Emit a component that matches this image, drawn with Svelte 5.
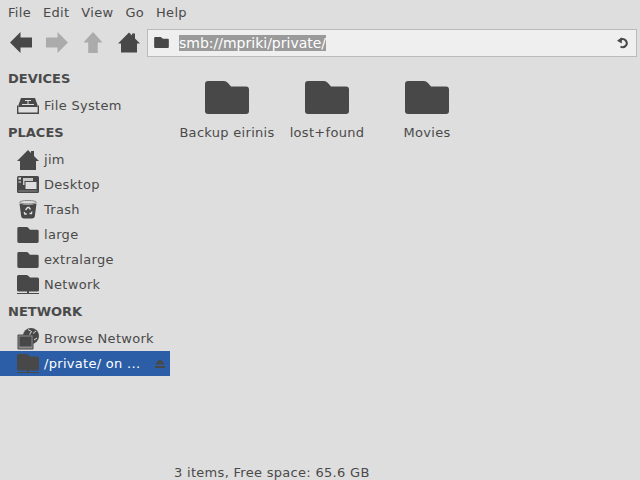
<script>
	const menus = ['File', 'Edit', 'View', 'Go', 'Help'];
	const places = [
		{ name: 'jim', icon: 'home' },
		{ name: 'Desktop', icon: 'desktop' },
		{ name: 'Trash', icon: 'trash' },
		{ name: 'large', icon: 'folder' },
		{ name: 'extralarge', icon: 'folder' },
		{ name: 'Network', icon: 'netfolder' }
	];
	const folders = ['Backup eirinis', 'lost+found', 'Movies'];
</script>

{#snippet folder(cls)}
	<svg class={cls} viewBox="0 0 44 33">
		<path d="M3 0H19Q21 0 23 2L26 5.500H41Q44 5.500 44 8.500V30Q44 33 41 33H3Q0 33 0 30V3Q0 0 3 0Z" />
	</svg>
{/snippet}

{#snippet icon(kind)}
	{#if kind === 'folder'}
		{@render folder('side-icon')}
	{:else if kind === 'netfolder'}
		<svg class="side-icon tall" viewBox="0 0 22 20">
			<path d="M1.500 0H9.500Q10.500 0 11.500 1L13 2.500H20.500Q22 2.500 22 4V15Q22 16.500 20.500 16.500H1.500Q0 16.500 0 15V1.500Q0 0 1.500 0Z" />
			<rect x="0" y="18" width="22" height="1" />
			<rect x="10" y="16" width="2" height="2" />
		</svg>
	{:else if kind === 'home'}
		<svg class="side-icon tall" viewBox="0 0 22 20">
			<path d="M11 0L14 3V1H17V6L22 11H19V20H3V11H0Z" />
		</svg>
	{:else if kind === 'desktop'}
		<svg class="side-icon tall" viewBox="0 0 22 17">
			<rect width="22" height="17" rx="1.500" />
			<rect x="1.500" y="1.500" width="2.500" height="2" fill="#dedede" />
			<rect x="1.500" y="5" width="2.500" height="2" fill="#9a9a9a" />
			<rect x="6" y="2" width="10" height="7" fill="#c8c8c8" />
			<rect x="7.500" y="5" width="12" height="8" fill="#484848" />
			<rect x="8.500" y="6" width="11" height="7" fill="#dedede" />
			<rect x="1.500" y="14.500" width="19" height="1" fill="#8a8a8a" />
		</svg>
	{:else if kind === 'trash'}
		<svg class="side-icon tall" viewBox="0 0 22 18.500">
			<ellipse cx="11" cy="2.200" rx="8.500" ry="1.700" fill="none" stroke="#8a8a8a" />
			<path d="M2.500 3.500Q11 6 19.500 3.500L17.800 16.500Q17.400 18.500 15 18.500H7Q4.600 18.500 4.200 16.500Z" />
			<path d="M8.500 10L10.500 7.500H12L13.500 9.500M14.800 11.500L14.500 13.500H12.500M9.800 14H7.800L7.200 12" fill="none" stroke="#dedede" stroke-width="1.300" />
		</svg>
	{:else if kind === 'drive'}
		<svg class="side-icon tall" viewBox="0 0 22 16">
			<path d="M4 0H18L20.500 7V9H1.500V7Z" />
			<rect x="8" y="2" width="6" height="1" fill="#dedede" />
			<rect x="10.500" y="3" width="1" height="3" fill="#dedede" />
			<rect x="5" y="6" width="12" height="1" fill="#dedede" />
			<path d="M0.700 7.500V15.200H21.300V7.500" fill="none" stroke="#484848" stroke-width="1.400" />
		</svg>
	{:else if kind === 'browse'}
		<svg class="side-icon big" viewBox="0 0 22 22">
			<circle cx="14" cy="8" r="8" />
			<path d="M11 1.500L14.500 3.500L12.500 6.500L16 9M19 3L16 5.500M17 12L20 10" fill="none" stroke="#dedede" />
			<rect x="0.500" y="6.500" width="16" height="15" rx="1" />
			<rect x="1.500" y="7.500" width="14" height="13" fill="#8c8c8c" />
			<rect x="2.500" y="8.500" width="12" height="10" fill="#484848" />
		</svg>
	{/if}
{/snippet}

{#snippet row(name, kind, selected = false)}
	<div class="row" class:selected>
		<span class="icon-box">{@render icon(kind)}</span>
		<span class="row-name">{name}</span>
		{#if selected}
			<svg class="eject" viewBox="0 0 10 9">
				<path d="M5 0L10 5.500H0Z" />
				<rect y="7" width="10" height="2" />
			</svg>
		{/if}
	</div>
{/snippet}

<div class="window">
	<nav class="menubar">
		{#each menus as m}
			<span class="menu">{m}</span>
		{/each}
	</nav>

	<div class="toolbar">
		<button class="tool" aria-label="Back">
			<svg viewBox="0 0 22 21"><path d="M0 10.500L10.500 0V5.500H22V15.500H10.500V21Z" /></svg>
		</button>
		<button class="tool off" aria-label="Forward">
			<svg viewBox="0 0 22 21"><path d="M22 10.500L11.500 0V5.500H0V15.500H11.500V21Z" /></svg>
		</button>
		<button class="tool off" aria-label="Up">
			<svg viewBox="0 0 22 22"><path d="M11 0L21 11H16V22H6V11H1Z" /></svg>
		</button>
		<button class="tool" aria-label="Home">
			<svg viewBox="0 0 22 20"><path d="M11 0L14 3V1H17V6L22 11H19V20H3V11H0Z" /></svg>
		</button>
		<div class="address">
			<svg class="addr-folder" viewBox="0 0 44 33">
				<path d="M3 0H19Q21 0 23 2L26 5.500H41Q44 5.500 44 8.500V30Q44 33 41 33H3Q0 33 0 30V3Q0 0 3 0Z" />
			</svg>
			<span class="addr-text">smb://mpriki/private/</span>
			<svg class="reload" viewBox="0 0 12 12">
				<path d="M3.500 2.800A4 4 0 1 1 3.500 9.500" fill="none" stroke="#484848" stroke-width="2" />
				<path d="M0 3.800L4.800 0.300V6.500Z" />
			</svg>
		</div>
	</div>

	<div class="body">
		<aside class="sidebar">
			<h3>DEVICES</h3>
			{@render row('File System', 'drive')}
			<h3>PLACES</h3>
			{#each places as p}
				{@render row(p.name, p.icon)}
			{/each}
			<h3>NETWORK</h3>
			{@render row('Browse Network', 'browse')}
			{@render row('/private/ on ...', 'netfolder', true)}
		</aside>

		<main class="files">
			{#each folders as f}
				<div class="file">
					{@render folder('file-icon')}
					<span>{f}</span>
				</div>
			{/each}
		</main>
	</div>

	<footer class="status">3 items, Free space: 65.6 GB</footer>
</div>

<style>
	:global(body) {
		margin: 0;
		background: #dedede;
	}

	.window {
		width: 640px;
		height: 480px;
		display: flex;
		flex-direction: column;
		overflow: hidden;
		background: #dedede;
		color: #4a4a4a;
		font-family: 'DejaVu Sans', sans-serif;
		font-size: 13px;
		letter-spacing: 0.3px;
	}

	svg {
		fill: #484848;
		display: block;
	}

	.menubar {
		display: flex;
		height: 24px;
		align-items: center;
		padding-left: 2px;
	}

	.menu {
		padding: 0 6px;
	}

	.toolbar {
		display: flex;
		align-items: center;
		height: 37px;
		padding: 0 3px;
		box-sizing: border-box;
	}

	.tool {
		width: 36px;
		height: 30px;
		padding: 0;
		border: none;
		background: none;
		display: flex;
		align-items: center;
		justify-content: center;
	}

	.tool svg {
		width: 22px;
		height: 21px;
	}

	.tool.off svg {
		fill: #ababab;
	}

	.address {
		flex: 1;
		height: 28px;
		box-sizing: border-box;
		border: 1px solid #bababa;
		background: #efefef;
		display: flex;
		align-items: center;
		padding: 0 7px 0 6px;
	}

	.addr-folder {
		width: 15px;
		height: 11px;
		margin-right: 10px;
	}

	.addr-text {
		background: #9a9a9a;
		color: #fff;
		font-size: 14px;
		letter-spacing: 0;
		line-height: 16px;
		flex: none;
	}

	.reload {
		width: 12px;
		height: 12px;
		margin-left: auto;
	}

	.body {
		flex: 1;
		display: flex;
		min-height: 0;
		padding-top: 3px;
	}

	.sidebar {
		width: 170px;
		flex: none;
	}

	h3 {
		margin: 0;
		height: 29px;
		line-height: 29px;
		padding-left: 8px;
		font-size: 13px;
		font-weight: bold;
		letter-spacing: 0;
	}

	.row {
		height: 25px;
		display: flex;
		align-items: center;
		padding-left: 17px;
	}

	.row.selected {
		background: #2b5ea7;
		color: #fff;
	}

	.icon-box {
		width: 22px;
		margin-right: 5px;
		display: flex;
		justify-content: center;
	}

	.side-icon {
		width: 22px;
		height: 16px;
	}

	.side-icon.tall {
		height: auto;
	}

	.side-icon.big {
		height: 22px;
	}

	.row-name {
		white-space: nowrap;
	}

	.eject {
		width: 10px;
		height: 9px;
		margin-left: auto;
		margin-right: 5px;
	}

	.files {
		flex: 1;
		display: flex;
		align-items: flex-start;
		padding: 17px 0 0 7px;
	}

	.file {
		width: 100px;
		display: flex;
		flex-direction: column;
		align-items: center;
		gap: 11px;
	}

	.file-icon {
		width: 44px;
		height: 33px;
	}

	.file span {
		white-space: nowrap;
	}

	.status {
		height: 15px;
		line-height: 15px;
		padding-left: 174px;
		flex: none;
	}
</style>
